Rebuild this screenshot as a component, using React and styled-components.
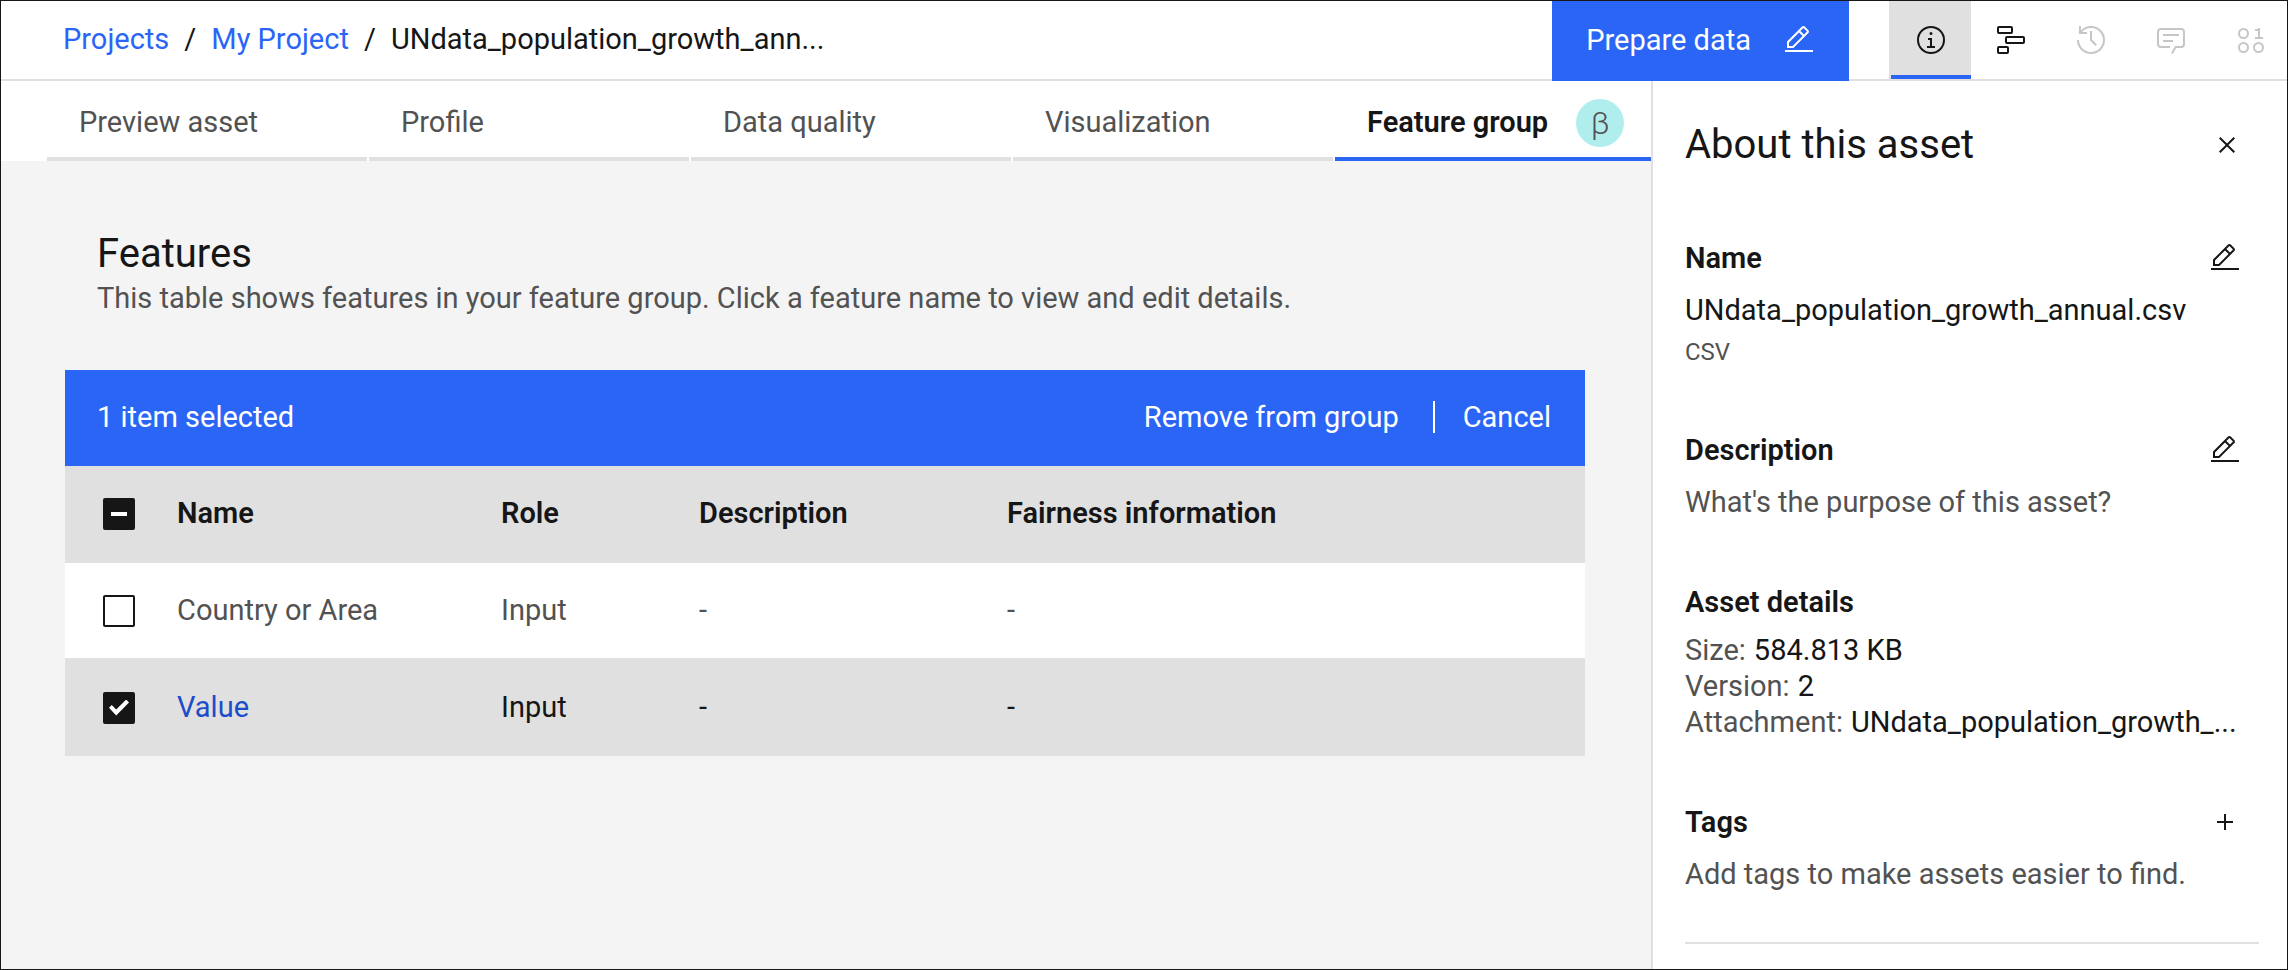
import React, { useState } from "react"
import styled, { createGlobalStyle, css } from "styled-components"

const colors = {
  blue: "#2a65f6",
  link: "#1c4ccb",
  text: "#161616",
  muted: "#525252",
  disabled: "#c6c6c6",
  border: "#e0e0e0",
  page: "#f4f4f4",
  beta: "#b0eeee",
}

const GlobalStyle = createGlobalStyle`
  * {
    box-sizing: border-box;
  }
  body {
    margin: 0;
    background: #fff;
    color: ${colors.text};
    font-family: Roboto, "Liberation Sans", sans-serif;
    font-size: 29px;
    line-height: 36px;
  }
  button {
    margin: 0;
    padding: 0;
    border: 0;
    background: none;
    color: inherit;
    font: inherit;
    cursor: pointer;
  }
  a {
    text-decoration: none;
  }
  h1, h2, h3, p, ol, dl, dd {
    margin: 0;
    padding: 0;
  }
`

const Page = styled.div`
  display: flex;
  flex-direction: column;
  min-height: 100vh;
  border: 1px solid ${colors.text};
`

/* Header */

const Header = styled.header`
  display: flex;
  height: 80px;
  box-shadow: inset 0 -2px ${colors.border};
`

const Breadcrumbs = styled.ol`
  flex: 1;
  display: flex;
  align-items: center;
  padding: 0 62px 4px;
  list-style: none;
  white-space: nowrap;
  li + li::before {
    content: "/";
    margin: 0 15px;
  }
  a {
    color: ${colors.blue};
  }
`

const PrepareButton = styled.button`
  display: flex;
  align-items: center;
  gap: 32px;
  padding: 0 34px 2px;
  background: ${colors.blue};
  color: #fff;
`

const IconBar = styled.div`
  display: flex;
  height: 78px;
  margin-left: 40px;
  border-left: 2px solid ${colors.border};
`

const IconTab = styled.button`
  display: flex;
  align-items: center;
  padding: 0 24px;
  &:last-child {
    padding-right: 20px;
  }
  &:disabled {
    color: ${colors.disabled};
    cursor: default;
  }
  ${({ $active }) => $active && css`
    background: ${colors.border};
    box-shadow: inset 0 -4px ${colors.blue};
  `}
`

const Svg = styled.svg`
  display: block;
  flex: none;
  width: 32px;
  height: 32px;
  fill: currentColor;
`

/* Main area */

const Body = styled.div`
  flex: 1;
  display: flex;
`

const Main = styled.main`
  flex: 1;
  min-width: 0;
  background: ${colors.page};
`

const Tabs = styled.div`
  display: flex;
  gap: 2px;
  height: 80px;
  padding-left: 46px;
  background: #fff;
`

const Tab = styled.button`
  flex: 0 1 320px;
  display: flex;
  align-items: center;
  padding: 2px 0 0 32px;
  color: ${colors.muted};
  white-space: nowrap;
  box-shadow: inset 0 -4px ${colors.border};
  &:last-child {
    flex: 1;
  }
  ${({ $active }) => $active && css`
    color: ${colors.text};
    font-weight: 600;
    box-shadow: inset 0 -4px ${colors.blue};
  `}
`

const Beta = styled.span`
  width: 48px;
  height: 48px;
  margin: 2px 0 0 28px;
  border-radius: 50%;
  background: ${colors.beta};
  color: ${colors.muted};
  font-size: 32px;
  font-weight: 300;
  line-height: 48px;
  text-align: center;
`

const Content = styled.section`
  padding: 69px 66px 0 64px;
`

const Intro = styled.div`
  display: flex;
  flex-direction: column;
  gap: 2px;
  padding: 0 32px 54px;
`

const Title = styled.h1`
  font-size: 40px;
  font-weight: 400;
  line-height: 48px;
`

const Text = styled.p`
  color: ${({ $strong }) => ($strong ? colors.text : colors.muted)};
`

const BatchBar = styled.div`
  display: flex;
  align-items: center;
  height: 96px;
  padding: 0 34px 2px 32px;
  background: ${colors.blue};
  color: #fff;
`

const BatchSummary = styled.p`
  flex: 1;
`

const CancelButton = styled.button`
  display: flex;
  align-items: center;
  &::before {
    content: "";
    width: 2px;
    height: 32px;
    margin: 0 28px 0 34px;
    background: #fff;
  }
`

const Table = styled.table`
  width: 100%;
  table-layout: fixed;
  border-collapse: separate;
  border-spacing: 0;
  text-align: left;
  th, td {
    padding: 0 16px 2px;
  }
  th:first-child, td:first-child {
    padding: 0 0 0 38px;
  }
  th {
    height: 96px;
    background: ${colors.border};
    font-weight: 600;
  }
`

const Column = styled.col`
  width: ${({ $width }) => $width}px;
`

const Row = styled.tr`
  background: ${({ $selected }) => ($selected ? colors.border : "#fff")};
  color: ${({ $selected }) => ($selected ? colors.text : colors.muted)};
  td {
    height: 97px;
    border: 0 solid ${colors.border};
    border-width: 1px 0;
  }
  a {
    color: ${colors.link};
  }
`

const Checkbox = styled.input`
  appearance: none;
  display: flex;
  align-items: center;
  justify-content: center;
  width: 32px;
  height: 32px;
  margin: 0;
  border: 2px solid ${colors.text};
  border-radius: 2px;
  &:checked, &:indeterminate {
    background: ${colors.text};
  }
  &:checked::after {
    content: "";
    width: 20px;
    height: 16px;
    background: #fff;
    clip-path: polygon(0 52%, 14% 34%, 36% 62%, 86% 0, 100% 18%, 36% 100%);
  }
  &:indeterminate::after {
    content: "";
    width: 16px;
    height: 4px;
    background: #fff;
  }
`

/* Side panel */

const Panel = styled.aside`
  flex: 0 0 636px;
  padding: 40px 28px 0 32px;
  border-left: 2px solid ${colors.border};
`

const PanelHeader = styled.div`
  display: flex;
  align-items: center;
  justify-content: space-between;
  padding: 0 16px 71px 0;
`

const PanelSection = styled.section`
  margin-bottom: 64px;
  &:last-child {
    margin-bottom: 0;
    padding-bottom: 50px;
    border-bottom: 2px solid ${colors.border};
  }
`

const SectionHeader = styled.div`
  display: flex;
  align-items: center;
  justify-content: space-between;
  margin-bottom: ${({ $tight }) => ($tight ? 12 : 16)}px;
  padding-right: 18px;
`

const SectionTitle = styled.h3`
  font-size: 29px;
  font-weight: 600;
`

const FileType = styled.p`
  margin-top: 8px;
  color: ${colors.muted};
  font-size: 24px;
  line-height: 32px;
`

const Detail = styled.div`
  display: flex;
  gap: 8px;
  white-space: nowrap;
  dt {
    color: ${colors.muted};
  }
`

const EditIcon = () => (
  <Svg viewBox="0 0 32 32">
    <path d="M2 26h28v2H2z" />
    <path d="M25.4 9c.8-.8.8-2 0-2.8l-3.6-3.6c-.8-.8-2-.8-2.8 0l-15 15V24h6.4l15-15zm-5-5L24 7.6l-3 3L17.4 7l3-3zM6 22v-3.6l10-10 3.6 3.6-10 10H6z" />
  </Svg>
)

const InfoIcon = () => (
  <Svg viewBox="0 0 32 32">
    <path d="M17 22v-8h-4v2h2v6h-3v2h8v-2h-3zM16 8a1.5 1.5 0 1 0 1.5 1.5A1.5 1.5 0 0 0 16 8z" />
    <path d="M16 30a14 14 0 1 1 14-14 14 14 0 0 1-14 14zm0-26a12 12 0 1 0 12 12A12 12 0 0 0 16 4z" />
  </Svg>
)

const FlowIcon = () => (
  <Svg viewBox="0 0 32 32">
    <g fill="none" stroke="currentColor" strokeWidth="2">
      <rect x="3" y="3" width="14" height="6" rx="1" />
      <rect x="11" y="13" width="18" height="6" rx="1" />
      <rect x="3" y="23" width="10" height="6" rx="1" />
    </g>
  </Svg>
)

const HistoryIcon = () => (
  <Svg viewBox="0 0 32 32">
    <path d="M20.59 22L15 16.41V7h2v8.58l5 5.01L20.59 22z" />
    <path d="M16 2A13.94 13.94 0 0 0 6 6.23V2H4v8h8V8H7.08A12 12 0 1 1 4 16H2A14 14 0 1 0 16 2z" />
  </Svg>
)

const ChatIcon = () => (
  <Svg viewBox="0 0 32 32">
    <path d="M17.74 30L16 29l4-7h6a2 2 0 0 0 2-2V8a2 2 0 0 0-2-2H6a2 2 0 0 0-2 2v12a2 2 0 0 0 2 2h9v2H6a4 4 0 0 1-4-4V8a4 4 0 0 1 4-4h20a4 4 0 0 1 4 4v12a4 4 0 0 1-4 4h-4.84z" />
    <path d="M8 10h16v2H8zM8 16h10v2H8z" />
  </Svg>
)

const DataIcon = () => (
  <Svg viewBox="0 0 32 32">
    <g fill="none" stroke="currentColor" strokeWidth="2">
      <circle cx="8.5" cy="9.5" r="4.5" />
      <circle cx="8.5" cy="23.5" r="4.5" />
      <circle cx="23.5" cy="23.5" r="4.5" />
    </g>
    <path d="M25 13V4h-2v1h-3v2h3v6h-3v2h8v-2z" />
  </Svg>
)

const CloseIcon = () => (
  <Svg viewBox="0 0 32 32">
    <path d="M24 9.4L22.6 8 16 14.6 9.4 8 8 9.4l6.6 6.6L8 22.6 9.4 24l6.6-6.6 6.6 6.6 1.4-1.4-6.6-6.6L24 9.4z" />
  </Svg>
)

const AddIcon = () => (
  <Svg viewBox="0 0 32 32">
    <path d="M17 15V8h-2v7H8v2h7v7h2v-7h7v-2h-7z" />
  </Svg>
)

const tabs = ["Preview asset", "Profile", "Data quality", "Visualization", "Feature group"]

const features = [
  { name: "Country or Area", role: "Input" },
  { name: "Value", role: "Input" },
]

const App = () => {
  const [selected, setSelected] = useState(["Value"])
  const [activeTab, setActiveTab] = useState("Feature group")

  const toggle = name =>
    setSelected(selected.includes(name) ? selected.filter(n => n !== name) : [...selected, name])

  const all = selected.length === features.length

  return (
    <Page>
      <GlobalStyle />
      <Header>
        <Breadcrumbs>
          <li><a href="#projects">Projects</a></li>
          <li><a href="#my-project">My Project</a></li>
          <li>UNdata_population_growth_ann...</li>
        </Breadcrumbs>
        <PrepareButton>Prepare data <EditIcon /></PrepareButton>
        <IconBar>
          <IconTab $active aria-label="Information"><InfoIcon /></IconTab>
          <IconTab aria-label="Lineage"><FlowIcon /></IconTab>
          <IconTab disabled aria-label="History"><HistoryIcon /></IconTab>
          <IconTab disabled aria-label="Comments"><ChatIcon /></IconTab>
          <IconTab disabled aria-label="Data"><DataIcon /></IconTab>
        </IconBar>
      </Header>
      <Body>
        <Main>
          <Tabs role="tablist">
            {tabs.map(tab => (
              <Tab
                key={tab}
                role="tab"
                aria-selected={tab === activeTab}
                $active={tab === activeTab}
                onClick={() => setActiveTab(tab)}
              >
                {tab}
                {tab === "Feature group" && <Beta>β</Beta>}
              </Tab>
            ))}
          </Tabs>
          <Content>
            <Intro>
              <Title>Features</Title>
              <Text>This table shows features in your feature group. Click a feature name to view and edit details.</Text>
            </Intro>
            <BatchBar>
              <BatchSummary>{selected.length} item selected</BatchSummary>
              <button>Remove from group</button>
              <CancelButton onClick={() => setSelected([])}>Cancel</CancelButton>
            </BatchBar>
            <Table>
              <colgroup>
                <Column $width={96} />
                <Column $width={324} />
                <Column $width={198} />
                <Column $width={308} />
                <col />
              </colgroup>
              <thead>
                <tr>
                  <th>
                    <Checkbox
                      type="checkbox"
                      aria-label="Select all features"
                      checked={all}
                      ref={el => { if (el) el.indeterminate = selected.length > 0 && !all }}
                      onChange={() => setSelected(all ? [] : features.map(f => f.name))}
                    />
                  </th>
                  <th>Name</th>
                  <th>Role</th>
                  <th>Description</th>
                  <th>Fairness information</th>
                </tr>
              </thead>
              <tbody>
                {features.map(({ name, role }) => {
                  const isSelected = selected.includes(name)
                  return (
                    <Row key={name} $selected={isSelected}>
                      <td>
                        <Checkbox
                          type="checkbox"
                          aria-label={`Select ${name}`}
                          checked={isSelected}
                          onChange={() => toggle(name)}
                        />
                      </td>
                      <td>{isSelected ? <a href="#feature">{name}</a> : name}</td>
                      <td>{role}</td>
                      <td>-</td>
                      <td>-</td>
                    </Row>
                  )
                })}
              </tbody>
            </Table>
          </Content>
        </Main>
        <Panel>
          <PanelHeader>
            <Title as="h2">About this asset</Title>
            <button aria-label="Close"><CloseIcon /></button>
          </PanelHeader>
          <PanelSection>
            <SectionHeader>
              <SectionTitle>Name</SectionTitle>
              <button aria-label="Edit name"><EditIcon /></button>
            </SectionHeader>
            <Text $strong>UNdata_population_growth_annual.csv</Text>
            <FileType>CSV</FileType>
          </PanelSection>
          <PanelSection>
            <SectionHeader>
              <SectionTitle>Description</SectionTitle>
              <button aria-label="Edit description"><EditIcon /></button>
            </SectionHeader>
            <Text>What's the purpose of this asset?</Text>
          </PanelSection>
          <PanelSection>
            <SectionHeader $tight>
              <SectionTitle>Asset details</SectionTitle>
            </SectionHeader>
            <dl>
              <Detail><dt>Size:</dt><dd>584.813 KB</dd></Detail>
              <Detail><dt>Version:</dt><dd>2</dd></Detail>
              <Detail><dt>Attachment:</dt><dd>UNdata_population_growth_...</dd></Detail>
            </dl>
          </PanelSection>
          <PanelSection>
            <SectionHeader>
              <SectionTitle>Tags</SectionTitle>
              <button aria-label="Add tag"><AddIcon /></button>
            </SectionHeader>
            <Text>Add tags to make assets easier to find.</Text>
          </PanelSection>
        </Panel>
      </Body>
    </Page>
  )
}

export default App
